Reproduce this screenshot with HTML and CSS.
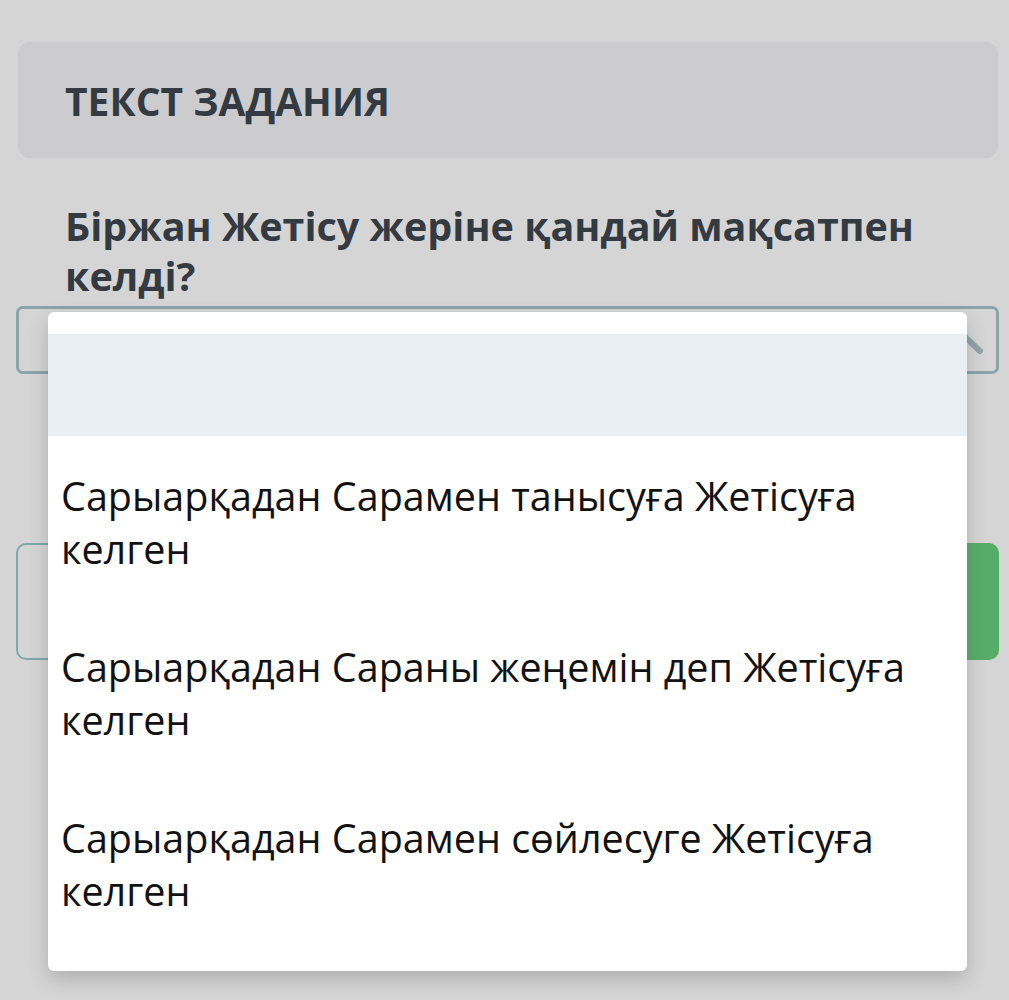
FILE: index.html
```html
<!DOCTYPE html>
<html lang="kk">

<head>
    <meta charset="UTF-8">
    <meta name="viewport" content="width=device-width, initial-scale=1.0">
    <title>Тапсырма</title>
    <link rel="stylesheet" href="styles.css">
</head>

<body>
    <div class="page">
        <!-- заголовок -->
        <div class="task-head">ТЕКСТ ЗАДАНИЯ</div>
        <!-- вопрос -->
        <div class="question">Біржан Жетісу жеріне қандай мақсатпен келді?</div>
        <!-- выпадающий список -->
        <div class="select">
            <svg class="chevron" width="40" height="24" viewBox="0 0 40 24">
                <path d="M4 20 L20 5 L36 20" fill="none" stroke="#8fa5a8" stroke-width="6" stroke-linecap="round" stroke-linejoin="round"/>
            </svg>
        </div>
        <!-- поле и кнопка под списком -->
        <div class="answer-row">
            <div class="answer-box"></div>
            <div class="btn-green"></div>
        </div>

        <!-- открытое меню -->
        <ul class="menu">
            <li class="opt opt-empty"></li>
            <li class="opt">Сарыарқадан Сарамен танысуға Жетісуға келген</li>
            <li class="opt">Сарыарқадан Сараны жеңемін деп Жетісуға келген</li>
            <li class="opt">Сарыарқадан Сарамен сөйлесуге Жетісуға келген</li>
        </ul>
    </div>
</body>

</html>
```

FILE: styles.css
```css
* {
    box-sizing: border-box;
}

body {
    margin: 0;
    background: #d5d5d5;
    font-family: "Open Sans", "Noto Sans", sans-serif;
}

.page {
    position: relative;
    width: 1009px;
    height: 1000px;
    padding: 42px 10px 0 16px;
}

.task-head {
    margin-left: 2px;
    width: 980px;
    height: 116px;
    padding-left: 47px;
    line-height: 118px;
    background: #cccccf;
    border-radius: 12px;
    color: #333a42;
    font-size: 39px;
    font-weight: 700;
}

.question {
    margin-top: 43px;
    padding-left: 49px;
    padding-right: 30px;
    color: #333a42;
    font-size: 39.5px;
    font-weight: 700;
    line-height: 50px;
}

.select {
    position: relative;
    margin-top: 5px;
    height: 68px;
    border: 3px solid #8aa4a7;
    border-radius: 7px;
}

.chevron {
    position: absolute;
    right: 12px;
    top: 22px;
}

.answer-row {
    display: flex;
    gap: 20px;
    margin-top: 169px;
    height: 117px;
}

.answer-box {
    flex: 1;
    border: 2px solid #7ea9a6;
    border-radius: 10px;
}

.btn-green {
    width: 180px;
    background: linear-gradient(90deg, #79b487, #54ad67);
    border-radius: 10px;
}

.menu {
    position: absolute;
    left: 48px;
    top: 312px;
    width: 919px;
    height: 659px;
    margin: 0;
    padding: 22px 0;
    list-style: none;
    background: #fff;
    border-radius: 6px;
    box-shadow: 0 8px 20px rgba(0, 0, 0, .18);
}

.opt {
    padding: 34px 30px 31px 13px;
    color: #121212;
    font-size: 39.5px;
    line-height: 53px;
}

.opt-empty {
    height: 102px;
    padding: 0;
    background: #e9eff2;
}
```
